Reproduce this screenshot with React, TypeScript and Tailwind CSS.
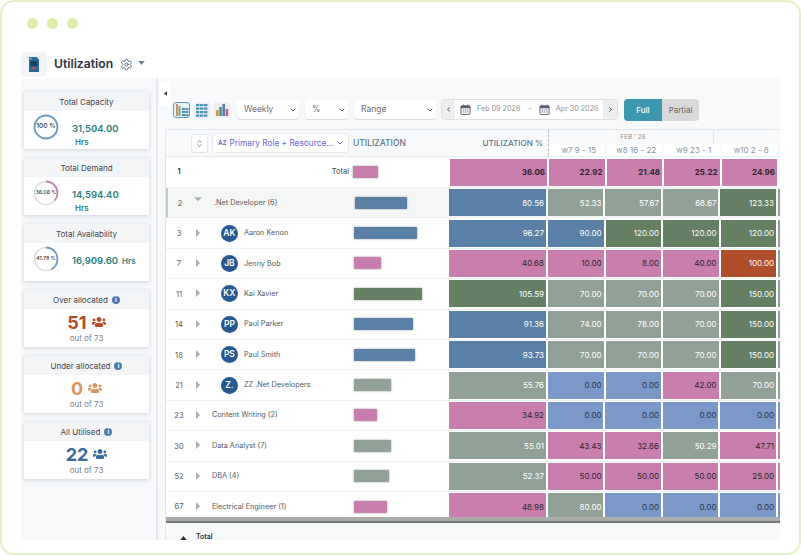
import { ChevronDown, ChevronLeft, ChevronRight, ChevronsUpDown, Settings } from "lucide-react";
import { FaUsers } from "react-icons/fa";

const cellColors: Record<string, string> = {
  p: "bg-[#c87fae] text-[#2b2530]",
  b: "bg-[#5b80a6] text-white",
  g: "bg-[#657f62] text-white",
  s: "bg-[#92a198] text-white",
  l: "bg-[#7b99c8] text-[#28324a]",
  o: "bg-[#b04e2c] text-white",
};

type Row = {
  id: string;
  name: string;
  bar: number;
  barColor: string;
  person?: string;
  open?: boolean;
  util: [string, string];
  weeks: [string, string][];
};

const barClasses: Record<string, string> = {
  p: "bg-[#c87fae]",
  b: "bg-[#5b80a6]",
  g: "bg-[#657f62]",
  s: "bg-[#92a198]",
};

const rows: Row[] = [
  { id: "2", name: ".Net Developer (6)", bar: 52, barColor: "b", open: true, util: ["80.56", "b"], weeks: [["52.33", "s"], ["57.67", "s"], ["68.67", "s"], ["123.33", "g"]] },
  { id: "3", name: "Aaron Kenon", person: "AK", bar: 63, barColor: "b", util: ["96.27", "b"], weeks: [["90.00", "b"], ["120.00", "g"], ["120.00", "g"], ["120.00", "g"]] },
  { id: "7", name: "Jenny Bob", person: "JB", bar: 27, barColor: "p", util: ["40.68", "p"], weeks: [["10.00", "p"], ["8.00", "p"], ["40.00", "p"], ["100.00", "o"]] },
  { id: "11", name: "Kai Xavier", person: "KX", bar: 68, barColor: "g", util: ["105.59", "g"], weeks: [["70.00", "s"], ["70.00", "s"], ["70.00", "s"], ["150.00", "g"]] },
  { id: "14", name: "Paul Parker", person: "PP", bar: 59, barColor: "b", util: ["91.36", "b"], weeks: [["74.00", "s"], ["78.00", "s"], ["70.00", "s"], ["150.00", "g"]] },
  { id: "18", name: "Paul Smith", person: "PS", bar: 61, barColor: "b", util: ["93.73", "b"], weeks: [["70.00", "s"], ["70.00", "s"], ["70.00", "s"], ["150.00", "g"]] },
  { id: "21", name: "ZZ .Net Developers", person: "Z.", bar: 37, barColor: "s", util: ["55.76", "s"], weeks: [["0.00", "l"], ["0.00", "l"], ["42.00", "p"], ["70.00", "s"]] },
  { id: "23", name: "Content Writing (2)", bar: 23, barColor: "p", util: ["34.92", "p"], weeks: [["0.00", "l"], ["0.00", "l"], ["0.00", "l"], ["0.00", "l"]] },
  { id: "30", name: "Data Analyst (7)", bar: 37, barColor: "s", util: ["55.01", "s"], weeks: [["43.43", "p"], ["32.86", "p"], ["50.29", "s"], ["47.71", "p"]] },
  { id: "52", name: "DBA (4)", bar: 35, barColor: "s", util: ["52.37", "s"], weeks: [["50.00", "p"], ["50.00", "p"], ["50.00", "p"], ["25.00", "p"]] },
  { id: "67", name: "Electrical Engineer (1)", bar: 33, barColor: "p", util: ["48.98", "p"], weeks: [["80.00", "s"], ["0.00", "l"], ["0.00", "l"], ["0.00", "l"]] },
];

function Ring({ label, pct, color, big }: { label: string; pct: number; color: string; big?: boolean }) {
  const c = 2 * Math.PI * 11.5;
  return (
    <div className="relative w-[26px] h-[26px] shrink-0">
      <svg viewBox="0 0 26 26" className="w-[26px] h-[26px] -rotate-90">
        <circle cx="13" cy="13" r="11.5" fill="none" stroke="#cfd2d4" strokeWidth="1.2" />
        <circle cx="13" cy="13" r="11.5" fill="none" stroke={color} strokeWidth="1.8" strokeDasharray={`${(c * pct) / 100} ${c}`} />
      </svg>
      <span className={`absolute inset-0 flex items-center justify-center whitespace-nowrap text-[#333] font-medium ${big ? "text-[6.5px]" : "text-[5.2px]"}`}>{label}</span>
    </div>
  );
}

function CardHead({ title, info }: { title: string; info?: boolean }) {
  return (
    <div className="h-[19px] bg-[#f4f5f6] flex items-center justify-center gap-1 text-[8px] text-[#3f4450]">
      {title}
      {info && <span className="w-[8px] h-[8px] rounded-full bg-[#4a7cb0] text-white text-[6px] font-bold flex items-center justify-center">i</span>}
    </div>
  );
}

function StatCard({ title, ring, pct, color, value, inlineHrs, big }: { title: string; ring: string; pct: number; color: string; value: string; inlineHrs?: boolean; big?: boolean }) {
  return (
    <div className="h-[57px] bg-white shadow-[0_1px_4px_rgba(90,100,120,0.25)]">
      <CardHead title={title} />
      <div className="flex items-start pl-[9px] pt-[3px] gap-[13px]">
        <Ring label={ring} pct={pct} color={color} big={big} />
        {inlineHrs ? (
          <div className="flex items-baseline gap-[4px] pt-[9px] text-[#2b8080] font-semibold">
            <span className="text-[9.5px] leading-[12px]">{value}</span>
            <span className="text-[8px]">Hrs</span>
          </div>
        ) : (
          <div className="pt-[9px] text-[#2b8080] font-semibold">
            <div className="text-[9.5px] leading-[12px]">{value}</div>
            <div className="text-[8px] leading-[10px] mt-[2px] pl-[3px]">Hrs</div>
          </div>
        )}
      </div>
    </div>
  );
}

function CountCard({ title, value, color }: { title: string; value: string; color: string }) {
  return (
    <div className="h-[57px] bg-white shadow-[0_1px_4px_rgba(90,100,120,0.25)]">
      <CardHead title={title} info />
      <div className={`flex items-center justify-center gap-[5px] h-[24px] pt-[2px] text-[18px] font-bold ${color}`}>
        {value}
        <FaUsers className="w-[14px] h-[14px]" />
      </div>
      <div className="text-center text-[8px] leading-[10px] text-[#7d8186]">out of 73</div>
    </div>
  );
}

function Select({ label, width }: { label: string; width: string }) {
  return (
    <div className={`${width} h-[19px] bg-white rounded-[3px] shadow-[0_1px_1px_rgba(0,0,0,0.12)] flex items-center justify-between pl-[7px] pr-[2px] text-[8.5px] text-[#6b7078]`}>
      {label}
      <ChevronDown className="w-[8px] h-[8px] text-[#444]" strokeWidth={2.5} />
    </div>
  );
}

function CalendarIcon() {
  return (
    <svg viewBox="0 0 12 12" className="w-[11px] h-[11px] shrink-0">
      <rect x="1" y="2" width="10" height="9.5" rx="1" fill="#f2f2f4" stroke="#5a5f70" />
      <rect x="1" y="2" width="10" height="2.6" fill="#5a5f70" />
      <path d="M3.5 0.5v2.5M8.5 0.5v2.5" stroke="#5a5f70" />
      <path d="M3 6.5h1.4M5.3 6.5h1.4M7.6 6.5H9M3 8.7h1.4M5.3 8.7h1.4M7.6 8.7H9" stroke="#7d7f90" />
    </svg>
  );
}

function ViewIcon({ kind, active }: { kind: "split" | "grid" | "bars"; active?: boolean }) {
  return (
    <div className={`h-[16px] rounded-[3px] flex items-center justify-center ${active ? "border border-[#5b9ac0] bg-[#eaf2f8] w-[17px]" : "bg-[#eceef1] w-[16px]"}`}>
      <svg viewBox="0 0 14 14" className="w-[14px] h-[14px]">
        {kind === "split" && (
          <>
            <rect x="1" y="1" width="2" height="12" fill="#c8926a" />
            <rect x="3.5" y="3" width="2" height="10" fill="#7fa88a" />
            <g fill="#4a8fb5">
              <rect x="7" y="5" width="3" height="2" />
              <rect x="10.5" y="5" width="3" height="2" />
              <rect x="7" y="8" width="3" height="2" />
              <rect x="10.5" y="8" width="3" height="2" />
              <rect x="7" y="11" width="3" height="2" />
              <rect x="10.5" y="11" width="3" height="2" />
            </g>
          </>
        )}
        {kind === "grid" && (
          <g fill="#4a8fb5">
            {[1, 4.5, 8, 11.5].map((y) => [1, 5, 9].map((x) => <rect key={`${x}-${y}`} x={x} y={y} width="3.4" height="2.2" />))}
          </g>
        )}
        {kind === "bars" && (
          <>
            <rect x="1" y="7" width="2.6" height="6" fill="#d29a58" />
            <rect x="4.2" y="4" width="2.6" height="9" fill="#3e9a94" />
            <rect x="7.4" y="1" width="2.6" height="12" fill="#5b80a6" />
            <rect x="10.6" y="6" width="2.6" height="7" fill="#c0607e" />
          </>
        )}
      </svg>
    </div>
  );
}

function Cell({ value, color, className }: { value: string; color: string; className: string }) {
  return (
    <div className={`${className} h-[27px] flex items-center justify-end pr-[2px] text-[8px] ${cellColors[color]}`}>{value}</div>
  );
}

function Caret({ open }: { open?: boolean }) {
  return open ? (
    <svg viewBox="0 0 8 8" className="w-[8px] h-[8px] mb-[6px]"><path d="M0 1.5h8L4 5z" fill="#a9adb0" /></svg>
  ) : (
    <svg viewBox="0 0 8 8" className="w-[8px] h-[8px] mb-[1px]"><path d="M2 0v8l4-4z" fill="#a9adb0" /></svg>
  );
}

function TableRow({ row }: { row: Row }) {
  return (
    <div className={`flex items-center h-[30.4px] shrink-0 border-b border-[#eef0f3] ${row.open ? "bg-[#f5f6f6] border-l-2 border-l-[#c9cccf]" : ""}`}>
      <div className={`${row.open ? "w-[23px]" : "w-[25px]"} text-center text-[7.5px] text-[#555] pl-[1px] pt-[1px]`}>{row.id}</div>
      <div className="w-[12px] pl-[3px] flex"><Caret open={row.open} /></div>
      {row.person ? (
        <div className="flex items-center w-[151px] pl-[18px] gap-[6px]">
          <span className="w-[17px] h-[17px] rounded-full bg-[#25598f] text-white text-[8.5px] font-semibold flex items-center justify-center">{row.person}</span>
          <span className="text-[7.3px] text-[#555b62] whitespace-nowrap pt-[1px]">{row.name}</span>
        </div>
      ) : (
        <div className={`w-[151px] text-[7.3px] text-[#555b62] whitespace-nowrap pt-[1px] ${row.open ? "pl-[11px]" : "pl-[9px]"}`}>{row.name}</div>
      )}
      <div className={`w-[96px] ${row.open ? "pl-[1px]" : ""}`}>
        <div className={`h-[12px] rounded-[1px] shadow-[0_0_2px_rgba(60,60,60,0.6)] ${barClasses[row.barColor]}`} style={{ width: row.bar }} />
      </div>
      <Cell value={row.util[0]} color={row.util[1]} className="w-[97px] mr-[2px]" />
      <div className="flex gap-[2px]">
        {row.weeks.map(([v, c], i) => (
          <Cell key={i} value={v} color={c} className="w-[55.5px]" />
        ))}
      </div>
      <div className={`w-[2px] h-[27px] ml-[2px] shrink-0 ${cellColors[row.weeks[3][1] === "g" || row.weeks[3][1] === "o" ? "s" : row.weeks[3][1]].split(" ")[0]}`} />
    </div>
  );
}

export default function App() {
  return (
    <div className="w-[801px] h-[555px] overflow-hidden bg-white font-['Inter',sans-serif]">
      <div className="w-[801px] h-[555px] border-2 border-[#e4f2c4] rounded-[14px] bg-white pl-[19px] pt-[16px] flex flex-col">
        <div className="flex gap-[9px] pl-[6px] h-[12px]">
          <span className="w-[11px] h-[11px] rounded-full bg-[#dcefaa]" />
          <span className="w-[11px] h-[11px] rounded-full bg-[#dcefaa]" />
          <span className="w-[11px] h-[11px] rounded-full bg-[#dcefaa]" />
        </div>

        <div className="flex items-center h-[26px] mt-[21px] shrink-0">
          <div className="w-[26px] h-[25px] rounded-[5px] bg-[#f1f3f6] flex items-center justify-center">
            <svg viewBox="0 0 14 18" className="w-[12px] h-[15px]">
              <path d="M1 0h9l3 3v15H1z" fill="#2a6a96" />
              <path d="M2 1h2v2H2z" fill="#7fc4e8" />
              <path d="M3 5h8v6H3z" fill="#1d3f63" />
              <rect x="5" y="12" width="4" height="3" fill="#c9504a" />
            </svg>
          </div>
          <span className="ml-[7px] text-[12.2px] font-semibold text-[#2a3140]">Utilization</span>
          <Settings className="ml-[7px] w-[13px] h-[13px] text-[#4a5666]" strokeWidth={1.6} />
          <svg viewBox="0 0 8 5" className="ml-[5px] w-[7px] h-[4px] mb-[3px]"><path d="M0 0h8L4 5z" fill="#6d7f92" /></svg>
        </div>

        <div className="flex h-[462px] w-[759px] mt-[1px] bg-[#f7f9fb] overflow-hidden">
          <div className="w-[137px] shrink-0 border-r-2 border-[#e6e8ec] pl-[3px] pr-[7px] pt-[14px] flex flex-col gap-[9px]">
            <StatCard title="Total Capacity" ring="100 %" pct={100} color="#6a9cc4" value="31,504.00" big />
            <StatCard title="Total Demand" ring="36.06 %" pct={36} color="#c87fae" value="14,594.40" />
            <StatCard title="Total Availability" ring="41.78 %" pct={42} color="#6a9cc4" value="16,909.60" inlineHrs />
            <CountCard title="Over allocated" value="51" color="text-[#b04e2c]" />
            <CountCard title="Under allocated" value="0" color="text-[#d9975f]" />
            <CountCard title="All Utilised" value="22" color="text-[#3a6c9e]" />
          </div>

          <div className="flex-1 min-w-0 flex flex-col relative">
            <div className="absolute left-[1px] top-[3px] w-[12px] h-[25px] bg-white rounded-[2px] flex items-center justify-center">
              <svg viewBox="0 0 4 6" className="w-[3px] h-[5px]"><path d="M4 0v6L0 3z" fill="#333" /></svg>
            </div>

            <div className="flex items-center h-[51px] pt-[12px] pl-[15px] shrink-0">
              <div className="flex gap-[4px] items-center">
                <ViewIcon kind="split" active />
                <ViewIcon kind="grid" />
                <ViewIcon kind="bars" />
              </div>
              <div className="ml-[7px] flex gap-[6px]">
                <Select label="Weekly" width="w-[62px]" />
                <Select label="%" width="w-[43px]" />
                <Select label="Range" width="w-[82px]" />
              </div>
              <div className="ml-[5px] w-[177px] h-[21px] border border-[#dedfe2] rounded-[4px] bg-white flex items-center text-[7.2px] text-[#8d9196] overflow-hidden">
                <div className="w-[13px] h-full bg-[#eceef0] flex items-center justify-center"><ChevronLeft className="w-[7px] h-[7px] text-[#333]" strokeWidth={3} /></div>
                <div className="ml-[5px]"><CalendarIcon /></div>
                <span className="ml-[6px]">Feb 09 2026</span>
                <span className="ml-[8px]">-</span>
                <div className="ml-[7px]"><CalendarIcon /></div>
                <span className="ml-[6px]">Apr 30 2026</span>
                <div className="ml-auto w-[14px] h-full bg-[#eceef0] flex items-center justify-center"><ChevronRight className="w-[7px] h-[7px] text-[#333]" strokeWidth={3} /></div>
              </div>
              <div className="ml-[6px] flex h-[22px] rounded-[4px] overflow-hidden text-[8px]">
                <div className="w-[38px] bg-[#3d97ae] text-white flex items-center justify-center font-medium">Full</div>
                <div className="w-[37px] bg-[#d9d9d9] text-[#5f6870] flex items-center justify-center">Partial</div>
              </div>
            </div>

            <div className="ml-[7px] flex-1 min-h-0 bg-white flex flex-col border-l border-t border-[#e2e5e9] overflow-hidden">
              <div className="flex h-[27px] shrink-0 bg-[#f7f9fb] border-b border-[#e8eaee]">
                <div className="w-[187px] flex items-center pl-[25px] gap-[4px]">
                  <div className="w-[17px] h-[19px] shrink-0 bg-white border border-[#e2e5e9] rounded-[3px] flex items-center justify-center">
                    <ChevronsUpDown className="w-[9px] h-[9px] text-[#666]" />
                  </div>
                  <div className="w-[137px] h-[20px] shrink-0 bg-white border border-[#e8eaee] rounded-[4px] flex items-center pl-[5px] gap-[3px] text-[8.3px] text-[#6f5fe0] whitespace-nowrap">
                    <span className="text-[6px] font-bold leading-none">AZ</span>
                    Primary Role + Resource...
                    <ChevronDown className="w-[8px] h-[8px]" strokeWidth={3} />
                  </div>
                </div>
                <div className="w-[96px] flex items-center text-[8.5px] font-medium text-[#5f7388]">UTILIZATION</div>
                <div className="w-[100px] flex items-center justify-end pr-[5px] text-[8.1px] font-medium text-[#5f7388] border-r border-dashed border-[#b8bcc0]">UTILIZATION %</div>
                <div className="flex-1 flex flex-col">
                  <div className="h-[14px] flex">
                    <div className="w-[165px] text-center pl-[4px] text-[6.5px] leading-[14px] text-[#8a939c] border-r border-[#e2e5e9]">FEB ' 26</div>
                  </div>
                  <div className="flex gap-[2px] h-[12px] text-[8px] leading-[12px] text-[#8a939c]">
                    {["w7 9 - 15", "w8 16 - 22", "w9 23 - 1", "w10 2 - 8"].map((w) => (
                      <div key={w} className="w-[55.5px] shrink-0 bg-white text-center pl-[4px] whitespace-nowrap">{w}</div>
                    ))}
                  </div>
                </div>
              </div>

              <div className="flex items-center h-[31px] shrink-0 border-b border-[#eef0f3]">
                <div className="w-[25px] text-center text-[7.5px] font-semibold text-[#333] pl-[1px]">1</div>
                <div className="w-[158px] text-right text-[7.5px] text-[#444]">Total</div>
                <div className="w-[101px] pl-[4px]">
                  <div className="h-[12px] w-[25px] bg-[#c87fae] rounded-[1px] shadow-[0_0_2px_rgba(60,60,60,0.6)]" />
                </div>
                <Cell value="36.06" color="p" className="w-[97px] mr-[2px] font-bold" />
                <div className="flex gap-[2px]">
                  {["22.92", "21.48", "25.22", "24.96"].map((v) => (
                    <Cell key={v} value={v} color="p" className="w-[55.5px] font-bold" />
                  ))}
                </div>
              </div>

              <div className="flex-1 min-h-0 overflow-hidden">
                {rows.map((r) => (
                  <TableRow key={r.id} row={r} />
                ))}
              </div>

              <div className="h-[6px] shrink-0 bg-[#a9adaa] border-b-2 border-[#77797a]" />
              <div className="h-[17px] shrink-0 bg-[#f7f9fb] relative overflow-hidden">
                <svg viewBox="0 0 8 5" className="absolute left-[14px] top-[13px] w-[7px] h-[4px]"><path d="M0 5h8L4 0z" fill="#333" /></svg>
                <span className="absolute left-[30px] top-[9px] text-[7px] font-semibold text-[#333]">Total</span>
              </div>
            </div>
          </div>
        </div>
      </div>
    </div>
  );
}
